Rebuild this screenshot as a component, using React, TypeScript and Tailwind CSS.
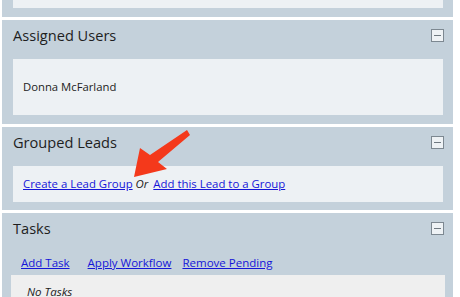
import React from "react";

function Minus() {
  return (
    <div className="mt-[9px] mr-[-1px] flex h-[13px] w-[13px] items-center justify-center border border-[#7d8891] bg-[#eef2f5]">
      <div className="h-px w-[7px] bg-[#6f7981]" />
    </div>
  );
}

function Header({ title }: { title: string }) {
  return (
    <div className="flex h-[39px] items-start justify-between">
      <div className="pt-[5px] text-[14.6px] leading-[20px] text-[#1e1e1e]">{title}</div>
      <Minus />
    </div>
  );
}

export default function App() {
  const font = { fontFamily: '"Open Sans", "DejaVu Sans", sans-serif' };
  return (
    <div className="relative h-[297px] w-[460px] overflow-hidden bg-white pl-[2px]" style={font}>
      {/* Panel 1 (cut off) */}
      <div className="w-[451px] bg-[#c4d1db] pb-[9px] pl-[11px] pr-[10px]">
        <div className="h-[8px] bg-[#edf1f4]" />
      </div>

      {/* Assigned Users */}
      <div className="mt-[3px] w-[451px] bg-[#c4d1db] pb-[9px] pl-[11px] pr-[10px]">
        <Header title="Assigned Users" />
        <div className="flex h-[56px] items-center bg-[#edf1f4] pl-[10px] text-[11.3px] text-[#222]">
          Donna McFarland
        </div>
      </div>

      {/* Grouped Leads */}
      <div className="mt-[3px] w-[451px] bg-[#c4d1db] pb-[8px] pl-[11px] pr-[10px]">
        <Header title="Grouped Leads" />
        <div className="flex h-[36px] items-center bg-[#edf1f4] pl-[10px] text-[11.4px] text-[#222]">
          <a href="#" className="text-[#1515d8] underline">Create a Lead Group</a>
          <span className="mx-[3px] italic">Or</span>
          <a href="#" className="ml-[2px] text-[#1515d8] underline">Add this Lead to a Group</a>
        </div>
      </div>

      {/* Tasks */}
      <div className="mt-[3px] h-[120px] w-[451px] bg-[#c4d1db] pl-[11px] pr-[10px]">
        <Header title="Tasks" />
        <div className="mt-[1px] flex h-[20px] items-center pl-[8px] text-[11.5px] leading-[20px]">
          <a href="#" className="text-[#1515d8] underline">Add Task</a>
          <a href="#" className="ml-[18px] text-[#1515d8] underline">Apply Workflow</a>
          <a href="#" className="ml-[11px] text-[#1515d8] underline">Remove Pending</a>
        </div>
        <div className="mx-[-2px] mt-[2px] h-[40px] bg-[#efefef] pl-[16px] pt-[10px] text-[11.5px] italic leading-[14px] text-[#222]">
          No Tasks
        </div>
      </div>

      {/* Red arrow overlay */}
      <svg className="absolute left-0 top-0" width="460" height="297" viewBox="0 0 460 297">
        <polygon
          points="187,130 190,135 158,162 167,169 134,177 140,148 150,155"
          fill="#f4391b"
        />
      </svg>
    </div>
  );
}
